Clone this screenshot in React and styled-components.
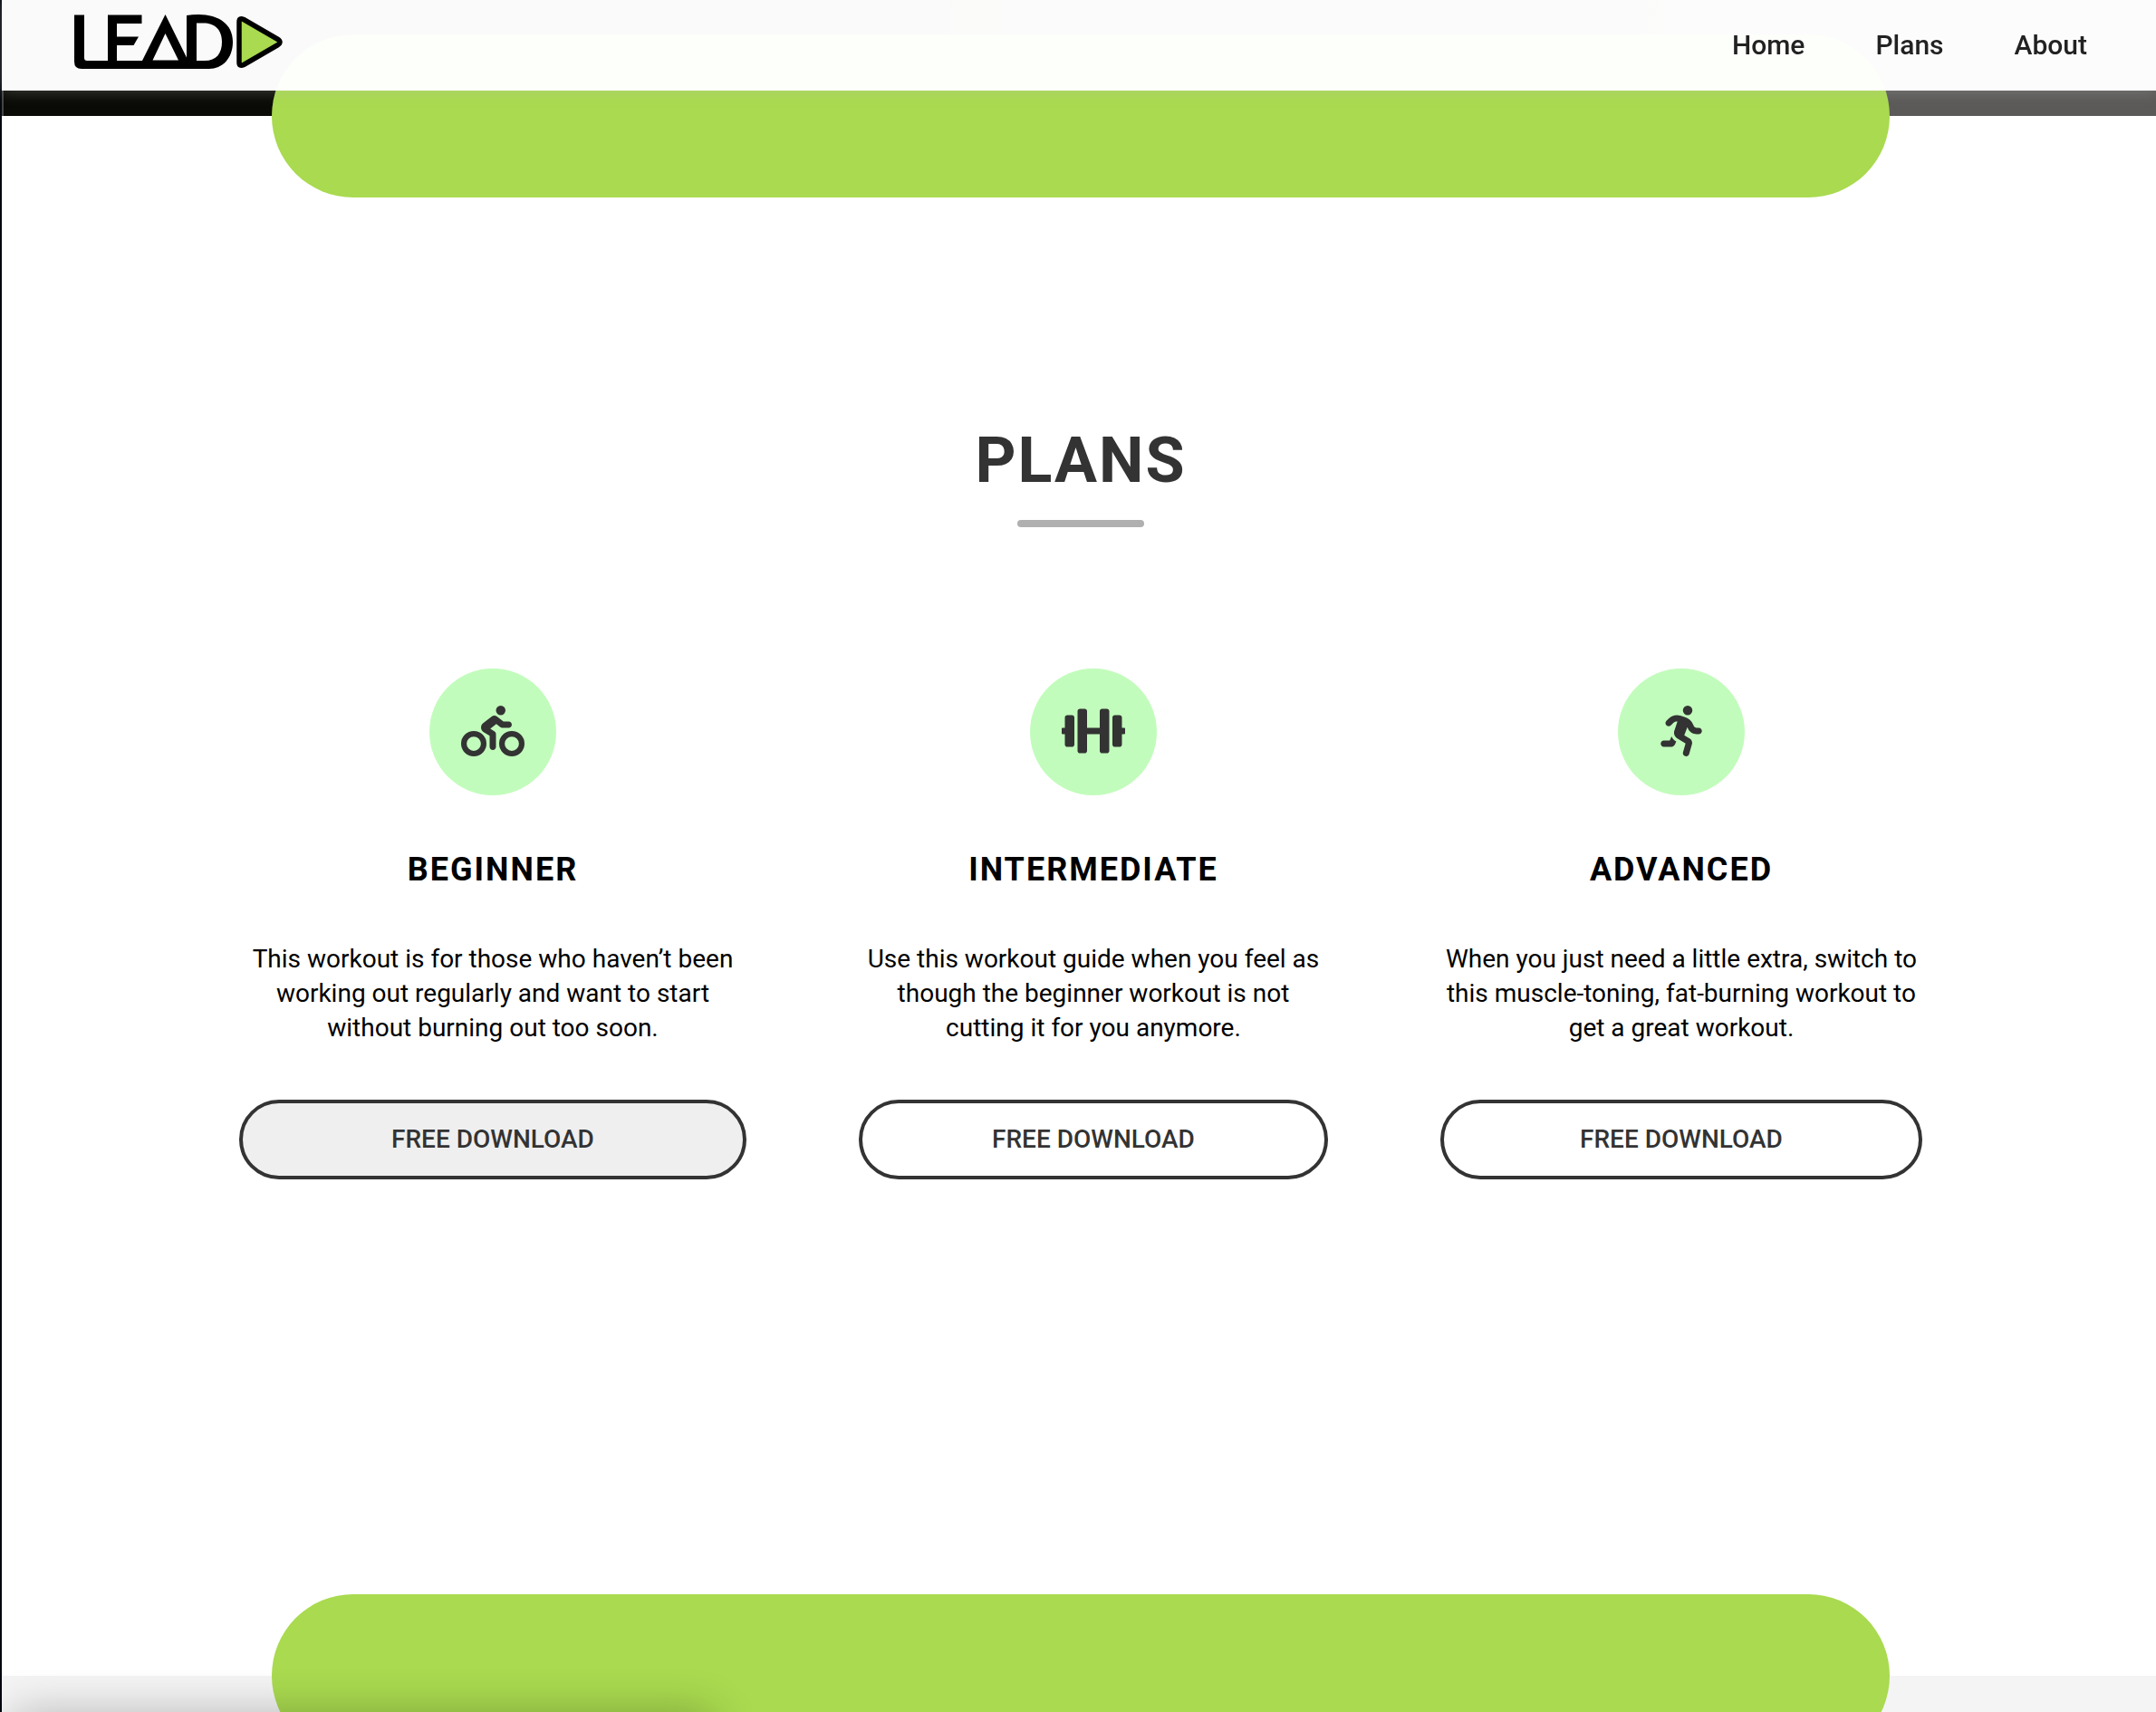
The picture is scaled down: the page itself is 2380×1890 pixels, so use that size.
import React from "react";
import styled, { createGlobalStyle } from "styled-components";
import { FaDumbbell } from "react-icons/fa";
import { FaPersonBiking, FaPersonRunning } from "react-icons/fa6";

const GlobalStyle = createGlobalStyle`
  * { box-sizing: border-box; }
  html { background: #fff; }
  body {
    margin: 0;
    overflow-x: hidden;
    font-family: Roboto, "Liberation Sans", sans-serif;
    color: #000;
  }
`;

const Page = styled.div`
  border-left: 2px solid #05070f;
  height: 100vh;
  overflow: hidden;
`;

const Header = styled.header`
  position: fixed;
  top: 0;
  left: 2px;
  right: 0;
  z-index: 2;
  height: 100px;
  padding: 0 76px 0 80px;
  display: flex;
  align-items: center;
  justify-content: space-between;
  background: rgba(255, 255, 255, 0.98);
  box-shadow: 0 0 16px rgba(187, 187, 187, 0.35);
`;

const LogoLink = styled.a`
  display: flex;
  padding-bottom: 8px;
  svg { display: block; width: 230px; height: 60px; }
`;

const Nav = styled.nav`
  display: flex;
  gap: 78px;
`;

const NavLink = styled.a`
  font-size: 30px;
  font-weight: 500;
  line-height: 36px;
  color: #222;
  text-decoration: none;
`;

const Hero = styled.section`
  height: 128px;
  border-left: 2px solid #444;
  background: linear-gradient(90deg, #0a0b06 0%, #0a0b06 20%, #5b5a59 80%, #5b5a59 100%);
`;

const Banner = styled.div`
  position: relative;
  width: 75%;
  height: 180px;
  margin: -90px auto;
  border-radius: 90px;
  background: #a9da4f;
`;

const Section = styled.section`
  display: flow-root;
  margin-right: -4px;
`;

const Plans = styled(Section)`
  min-height: 1722px;
`;

const Heading = styled.h2`
  margin: 0;
  padding-top: 338px;
  font-size: 70px;
  font-weight: 700;
  line-height: 84px;
  letter-spacing: 2px;
  text-align: center;
  color: #333;
  &::after {
    content: "";
    display: block;
    width: 140px;
    height: 8px;
    margin: 24px auto 0;
    border-radius: 4px;
    background: #b0b0b0;
  }
`;

const PlanGrid = styled.div`
  width: 78%;
  margin: 156px auto 0;
  display: grid;
  grid-template-columns: 560fr 518fr 532fr;
  column-gap: 124px;
`;

const Plan = styled.article`
  display: flex;
  flex-direction: column;
  align-items: center;
  text-align: center;
`;

const IconCircle = styled.div`
  width: 140px;
  height: 140px;
  padding-bottom: 2px;
  border-radius: 50%;
  display: flex;
  align-items: center;
  justify-content: center;
  background: #c2fcbc;
  color: #333;
  svg { height: 56px; width: 70px; }
`;

const PlanTitle = styled.h3`
  margin: 60px 0 0;
  font-size: 36px;
  font-weight: 700;
  line-height: 44px;
  letter-spacing: 2px;
`;

const PlanText = styled.p`
  margin: 58px 0 60px;
  font-size: 28px;
  line-height: 38px;
`;

const Download = styled.button`
  width: 100%;
  height: 88px;
  border: 4px solid #333;
  border-radius: 44px;
  background: ${(p) => (p.$active ? "#efefef" : "#fff")};
  color: #333;
  font: 500 28px/32px Roboto, "Liberation Sans", sans-serif;
  cursor: pointer;
`;

const About = styled(Section)`
  height: 200px;
  background: #f4f4f4;
`;

const Shade = styled.div`
  position: fixed;
  left: 20px;
  bottom: -40px;
  z-index: 3;
  width: 760px;
  height: 30px;
  box-shadow: 0 0 50px 6px rgba(0, 0, 0, 0.3);
  pointer-events: none;
`;

const Logo = () => (
  <svg viewBox="0 0 230 60" role="img" aria-label="LEAD">
    <path
      fillRule="evenodd"
      d="M0 .5H11V48Q11 51 14 51H37V.5H74.500V10H47V24.500H71L65.500 34H47V51H75L100.500 0L124 47.500V1Q130 0 137 0C160 0 175 11 175 30C175 49 163 60 149 60H8Q0 60 0 52ZM100.500 21L86.500 50.500H115ZM135 9.500V51H144C157 51 163 43 163 30C163 16 154 9.500 143 9.500Z"
    />
    <path
      d="M182 8Q182 3 187 5.500L224 27Q230 30.500 224 34L187 55.500Q182 58 182 53Z"
      fill="#a9da4f"
      stroke="#000"
      strokeWidth="5.500"
      strokeLinejoin="round"
    />
  </svg>
);

const plans = [
  {
    title: "BEGINNER",
    icon: <FaPersonBiking aria-hidden="true" />,
    text: "This workout is for those who haven’t been working out regularly and want to start without burning out too soon.",
    active: true,
  },
  {
    title: "INTERMEDIATE",
    icon: <FaDumbbell aria-hidden="true" />,
    text: "Use this workout guide when you feel as though the beginner workout is not cutting it for you anymore.",
  },
  {
    title: "ADVANCED",
    icon: <FaPersonRunning aria-hidden="true" viewBox="0 0 416 512" />,
    text: "When you just need a little extra, switch to this muscle-toning, fat-burning workout to get a great workout.",
  },
];

export default function App() {
  return (
    <>
      <GlobalStyle />
      <Header>
        <LogoLink href="#home"><Logo /></LogoLink>
        <Nav>
          <NavLink href="#home">Home</NavLink>
          <NavLink href="#plans">Plans</NavLink>
          <NavLink href="#about">About</NavLink>
        </Nav>
      </Header>
      <Page>
        <Hero id="home" />
        <Plans id="plans">
          <Banner />
          <Heading>PLANS</Heading>
          <PlanGrid>
            {plans.map(({ title, icon, text, active }) => (
              <Plan key={title}>
                <IconCircle>{icon}</IconCircle>
                <PlanTitle>{title}</PlanTitle>
                <PlanText>{text}</PlanText>
                <Download type="button" $active={active}>FREE DOWNLOAD</Download>
              </Plan>
            ))}
          </PlanGrid>
        </Plans>
        <About id="about"><Banner /></About>
      </Page>
      <Shade />
    </>
  );
}
